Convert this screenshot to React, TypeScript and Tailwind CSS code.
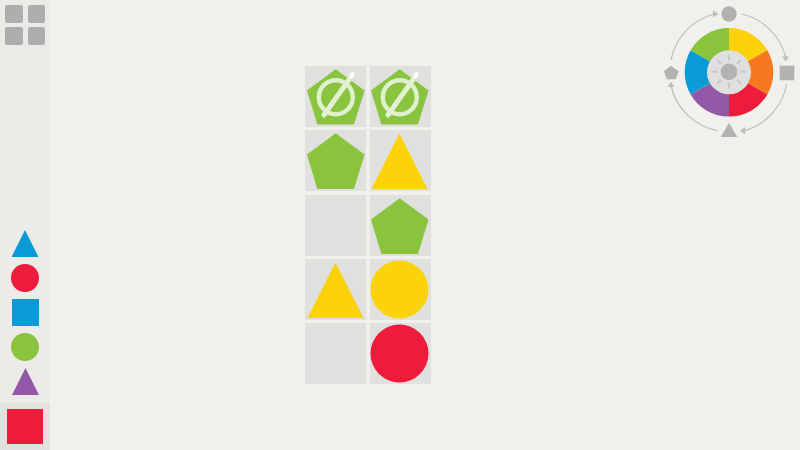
type ShapeKind = "pentagon" | "triangle" | "circle" | "apex";

const GREEN = "#8ac43f";
const YELLOW = "#fcd20a";
const RED = "#ed1c3c";
const BLUE = "#0a9bd6";
const PURPLE = "#9257a6";
const ORANGE = "#f7781f";
const RING = "#bdbdbb";
const ICON = "#b2b2b1";

function Shape({ kind, fill }: { kind: ShapeKind; fill: string }) {
  return (
    <svg viewBox="0 0 61 61" className="h-full w-full block">
      {kind === "pentagon" && <polygon points="30.7,3.3 59.6,24.5 49,59 12.3,59 2,24.5" fill={fill} />}
      {kind === "triangle" && <polygon points="30.5,3.5 58.5,59 2.5,59" fill={fill} />}
      {kind === "circle" && <circle cx="30.5" cy="30.5" r="29" fill={fill} />}
      {kind === "apex" && <polygon points="30.5,0 61,61 0,61" fill={fill} />}
    </svg>
  );
}

function Blocked() {
  return (
    <svg viewBox="0 0 61 61" className="h-full w-full block">
      <polygon points="30.7,3.3 59.6,24.5 49,58.5 12.3,58.5 2,24.5" fill={GREEN} />
      <circle cx="30.8" cy="31.2" r="17" fill="none" stroke="#dff0ce" strokeWidth="4.4" />
      <line x1="19" y1="49" x2="46.5" y2="10" stroke="#e2f2d0" strokeWidth="5" strokeLinecap="round" />
      <line x1="46" y1="10.500" x2="47.6" y2="8.200" stroke="#ffffff" strokeWidth="4" strokeLinecap="round" />
    </svg>
  );
}

const cells: (ShapeKind | "blocked" | null)[] = [
  "blocked", "blocked",
  "pentagon", "triangle",
  null, "pentagon",
  "triangle", "circle",
  null, "circle",
];
const fills = [GREEN, GREEN, GREEN, YELLOW, "", GREEN, YELLOW, YELLOW, "", RED];

function Board() {
  return (
    <div className="grid grid-cols-[61px_61px] grid-rows-[repeat(5,61px)] gap-x-[3.7px] gap-y-[3.3px] self-center ml-[255px]">
      {cells.map((c, i) => (
        <div key={i} className="bg-[#e0e0df]">
          <div className={i % 2 ? "h-full -translate-x-px" : "h-full"}>
            {c === "blocked" ? <Blocked /> : c ? <Shape kind={c} fill={fills[i]} /> : null}
          </div>
        </div>
      ))}
    </div>
  );
}

function Sidebar() {
  return (
    <aside className="w-[50px] h-full shrink-0 flex flex-col justify-between bg-[#ecebe8]">
      <div className="grid grid-cols-[17.5px_17.5px] gap-x-[5px] gap-y-[4.5px] pt-[5px] pl-[5px]">
        {[0, 1, 2, 3].map((i) => (
          <div key={i} className="h-[17.5px] rounded-[2px] bg-[#aeaeae]" />
        ))}
      </div>
      <div className="flex flex-col items-center">
        <div className="flex flex-col items-center gap-[7px] pb-[8px]">
          <div className="w-[28px] h-[27px]"><Shape kind="apex" fill={BLUE} /></div>
          <div className="w-[28px] h-[28px] rounded-full bg-[#ed1c3c]" />
          <div className="w-[27px] h-[27px] bg-[#0a9bd6]" />
          <div className="w-[28px] h-[28px] rounded-full bg-[#8ac43f]" />
          <div className="w-[27px] h-[27px]"><Shape kind="apex" fill={PURPLE} /></div>
        </div>
        <div className="w-full h-[47px] bg-[#e1e1e0] flex items-center justify-center">
          <div className="w-[36px] h-[35px] bg-[#ed1c3c]" />
        </div>
      </div>
    </aside>
  );
}

// wheel centre in svg units
const CX = 69;
const CY = 72.3;

function wedge(start: number, end: number, r: number) {
  const p = (a: number) => {
    const t = ((a - 90) * Math.PI) / 180;
    return `${CX + r * Math.cos(t)} ${CY + r * Math.sin(t)}`;
  };
  return `M${CX} ${CY}L${p(start)}A${r} ${r} 0 0 1 ${p(end)}Z`;
}

function Wheel() {
  const colors = [YELLOW, ORANGE, RED, PURPLE, BLUE, GREEN];
  return (
    <svg viewBox="0 0 140 145" className="w-[140px] h-[145px] ml-auto self-start block">
      {colors.map((c, i) => (
        <path key={c} d={wedge(i * 60, i * 60 + 60, 44.3)} fill={c} />
      ))}
      <circle cx={CX} cy={CY} r="22" fill="#e0e0df" />
      <circle cx={CX} cy={CY - 0.5} r="8.3" fill="#b2b2b1" />
      {[0, 45, 90, 135, 180, 225, 270, 315].map((a) => (
        <polygon
          key={a}
          transform={`rotate(${a} ${CX} ${CY - 0.5})`}
          points={`${CX - 1.2},${CY - 12} ${CX + 1.2},${CY - 12} ${CX + 0.5},${CY - 18} ${CX - 0.5},${CY - 18}`}
          fill="#c6c6c5"
        />
      ))}

      <g fill="none" stroke={RING} strokeWidth="1.2">
        <path d="M11 60A59.5 59.5 0 0 1 54 14" />
        <path d="M81.700 14A59.5 59.5 0 0 1 125.700 57" />
        <path d="M126.700 84A59.5 59.5 0 0 1 84 130.700" />
        <path d="M57.300 130.700A59.5 59.5 0 0 1 11 86" />
      </g>
      <g fill={RING}>
        <polygon points="58.300,14 53,10.500 53,17.500" />
        <polygon points="125.700,61.700 122.200,56.500 129.200,56.500" />
        <polygon points="80,130.700 85.300,127.200 85.300,134.200" />
        <polygon points="11,81.700 7.500,87 14.500,87" />
      </g>
      <g fill={ICON}>
        <circle cx="69" cy="14" r="7.700" />
        <rect x="119.700" y="65.700" width="14.600" height="14.600" />
        <polygon points="69,122.700 77.300,137 60.700,137" />
        <polygon points="11,65.700 18.700,71.300 15.700,79.300 6.700,79.300 4,71.300" />
      </g>
    </svg>
  );
}

export default function App() {
  return (
    <div className="h-screen w-full flex overflow-hidden bg-[#f1f0ec]">
      <Sidebar />
      <main className="flex flex-1 h-full">
        <Board />
        <Wheel />
      </main>
    </div>
  );
}
